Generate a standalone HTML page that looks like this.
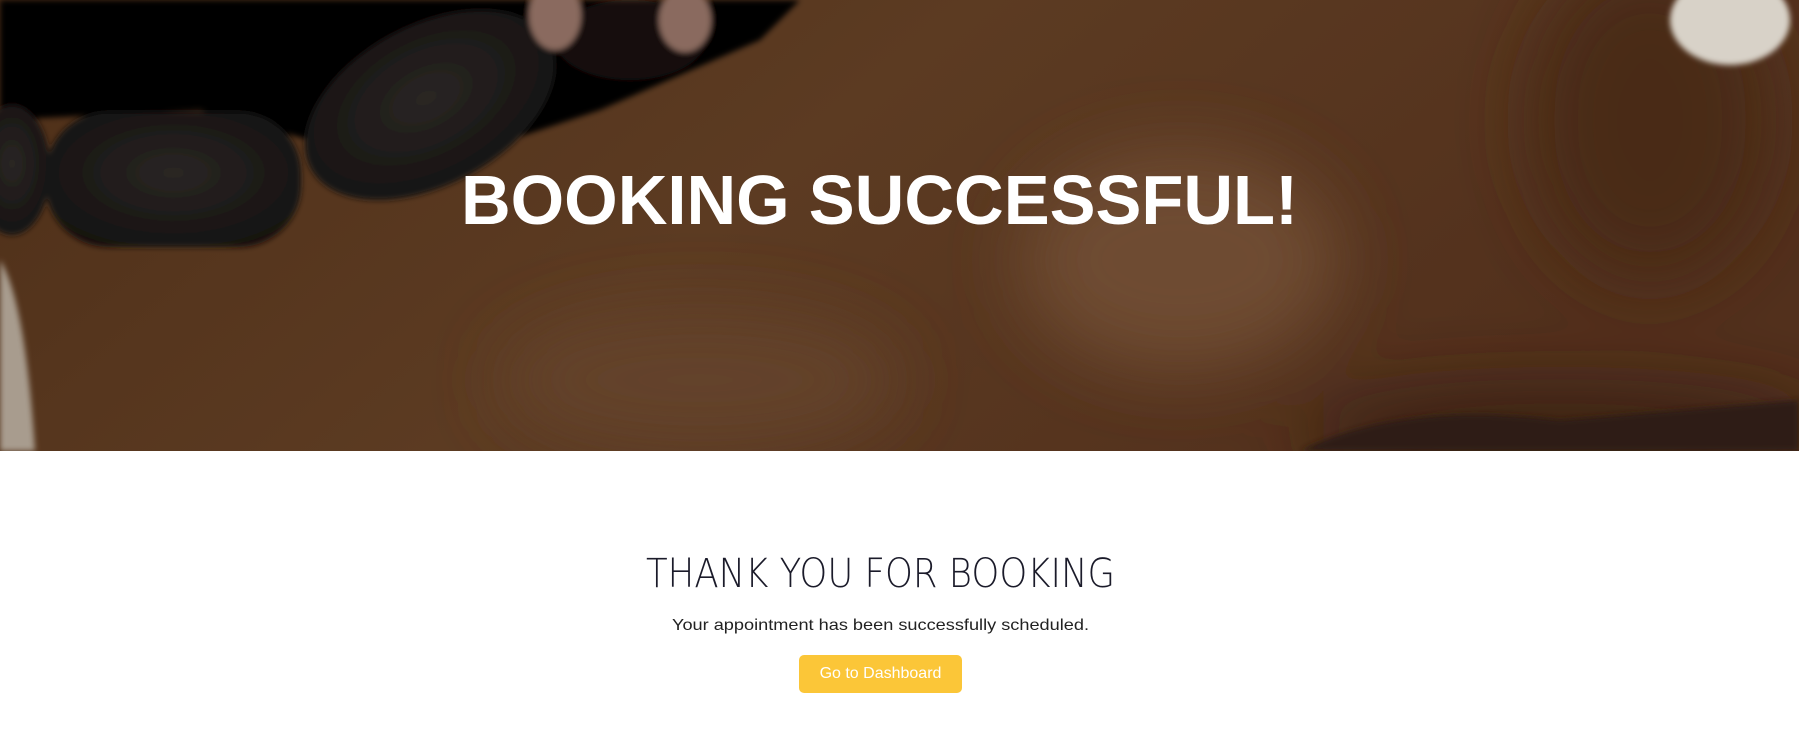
<!DOCTYPE html>
<html><head><meta charset="utf-8"><style>
html,body{margin:0;padding:0;width:1799px;height:755px;overflow:hidden;background:#fff;font-family:"Liberation Sans",sans-serif}
.hero{position:absolute;left:0;top:0;width:1799px;height:451px;overflow:hidden}
.btn{position:absolute;left:799px;top:655px;width:163px;height:38px;background:#fbc638;border-radius:5px;color:#fff;font-size:16px;line-height:38px;text-align:center}
</style></head><body>
<div class="hero">
<svg width="1799" height="451" viewBox="0 0 1799 451">
<defs>
<filter id="b" x="-30%" y="-30%" width="160%" height="160%"><feGaussianBlur stdDeviation="35"/></filter>
<filter id="s" x="-20%" y="-20%" width="140%" height="140%"><feGaussianBlur stdDeviation="3"/></filter>
<linearGradient id="g" x1="0" y1="0" x2="1" y2="0.3">
<stop offset="0" stop-color="#4e2f18"/><stop offset="0.5" stop-color="#5c3b22"/><stop offset="1" stop-color="#52301c"/>
</linearGradient>
<radialGradient id="st" cx="0.5" cy="0.45" r="0.6"><stop offset="0" stop-color="#2a2624"/><stop offset="1" stop-color="#141110"/></radialGradient>
</defs>
<rect width="1799" height="451" fill="url(#g)"/>
<g filter="url(#b)">
<ellipse cx="1180" cy="260" rx="160" ry="110" fill="#6e4c32"/>
<ellipse cx="700" cy="380" rx="200" ry="70" fill="#644329"/>
<ellipse cx="1560" cy="430" rx="260" ry="40" fill="#3a2214"/>
<ellipse cx="1650" cy="120" rx="120" ry="160" fill="#4a2c18"/>
</g>
<g filter="url(#s)">
<path d="M0 0 H800 L760 40 L600 110 L420 170 L200 110 L0 120 Z" fill="#030201"/>
<ellipse cx="12" cy="170" rx="38" ry="65" fill="url(#st)"/>
<rect x="46" y="112" width="255" height="135" rx="62" fill="url(#st)"/>
<ellipse cx="430" cy="105" rx="135" ry="80" transform="rotate(-28 430 105)" fill="url(#st)"/>
<ellipse cx="630" cy="40" rx="75" ry="40" fill="#141110"/>
<ellipse cx="555" cy="15" rx="26" ry="35" fill="#8a6a5e"/>
<ellipse cx="685" cy="20" rx="26" ry="32" fill="#8a6a5e"/>
<ellipse cx="1730" cy="20" rx="60" ry="45" fill="#d8d2c8"/>
<path d="M0 260 Q25 300 35 451 H0 Z" fill="#a89c8e"/>
<path d="M1300 451 Q1400 400 1560 420 L1799 400 V451 Z" fill="#2e1c12"/>
</g>
<text x="461" y="224" fill="#fff" font-family="Liberation Sans" font-weight="bold" font-size="70" textLength="837" lengthAdjust="spacingAndGlyphs">BOOKING SUCCESSFUL!</text>
</svg>
</div>
<svg style="position:absolute;left:0;top:540px" width="1799" height="100">
<text x="646" y="47" fill="#1b1b2a" font-family="DejaVu Sans" font-size="40" textLength="469" lengthAdjust="spacingAndGlyphs" style="font-weight:200">THANK YOU FOR BOOKING</text>
<text x="672" y="90" fill="#222" font-family="Liberation Sans" font-size="16" textLength="417" lengthAdjust="spacingAndGlyphs">Your appointment has been successfully scheduled.</text>
</svg>
<div class="btn">Go to Dashboard</div>
</body></html>
